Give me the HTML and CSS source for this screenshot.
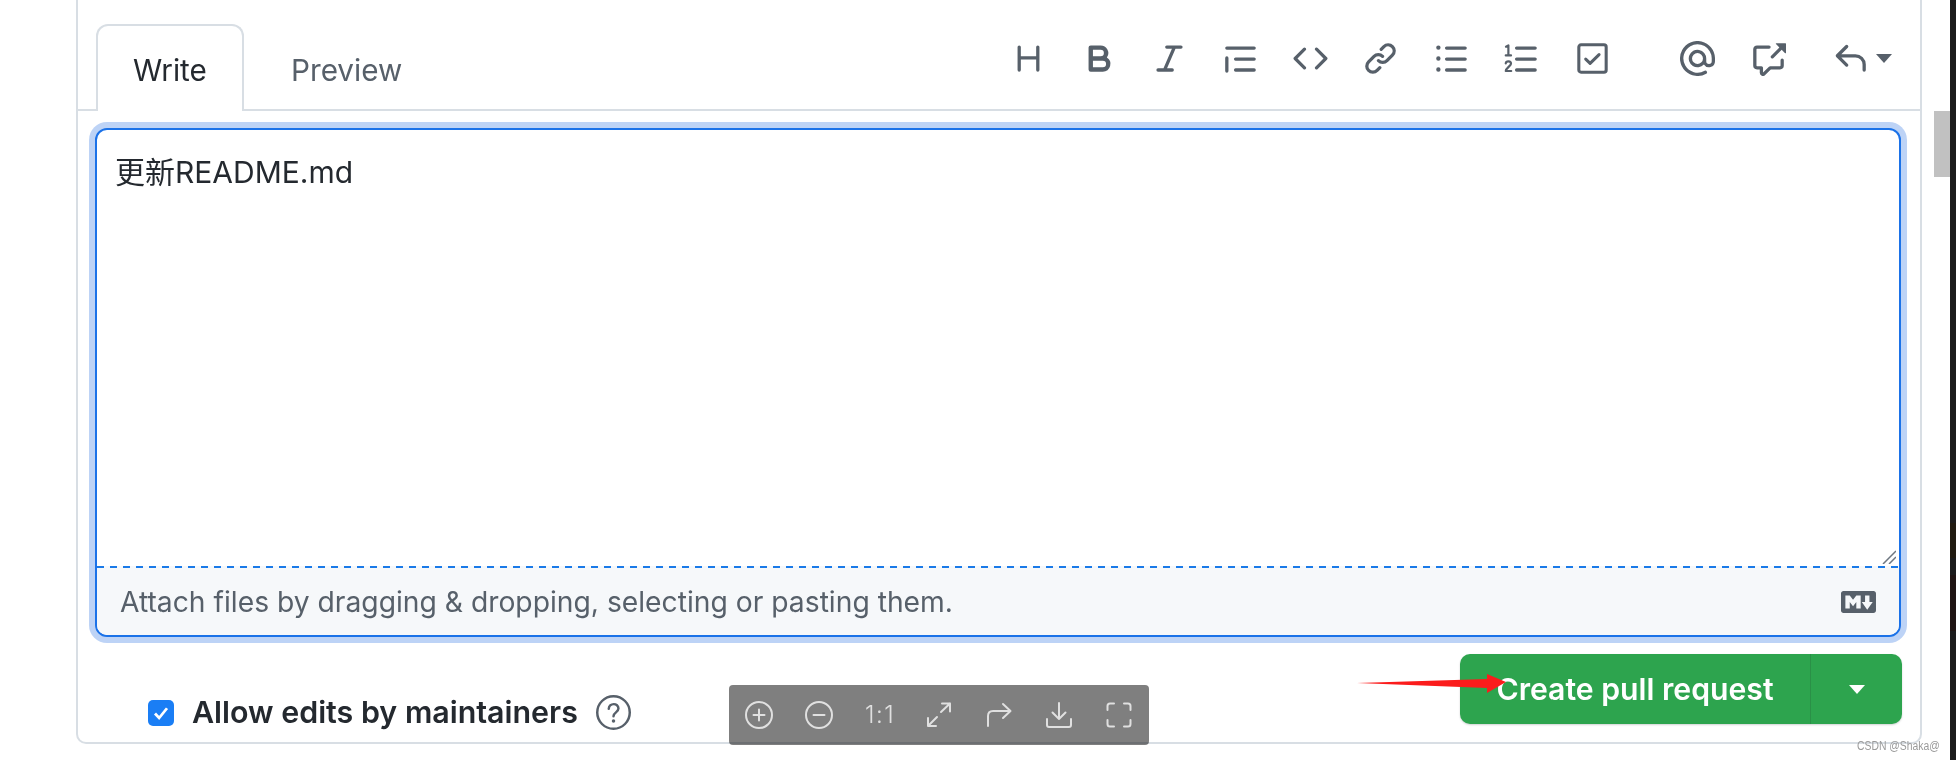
FILE: index.html
```html
<!DOCTYPE html>
<html lang="en">
<head>
<meta charset="utf-8">
<title>Create pull request</title>
<link rel="stylesheet" href="styles.css">
</head>
<body>
<div class="page">
  <main class="content">
    <section class="panel">
      <header class="head">
        <div class="tab tab-active">Write</div>
        <div class="tab tab-idle">Preview</div>
        <nav class="tools">
          <div class="tool-group">
            <svg class="ico" viewBox="0 0 16 16"><path d="M3.75 2a.75.75 0 0 1 .75.75V7h7V2.75a.75.75 0 0 1 1.5 0v10.5a.75.75 0 0 1-1.5 0V8.5h-7v4.75a.75.75 0 0 1-1.5 0V2.75A.75.75 0 0 1 3.75 2Z"/></svg>
            <svg class="ico" viewBox="0 0 16 16"><path d="M4 2h4.5a3.501 3.501 0 0 1 2.852 5.53A3.499 3.499 0 0 1 9.5 14H4a1 1 0 0 1-1-1V3a1 1 0 0 1 1-1Zm1 7v3h4.5a1.5 1.5 0 0 0 0-3Zm3.5-2a1.5 1.5 0 0 0 0-3H5v3Z"/></svg>
            <svg class="ico" viewBox="0 0 16 16"><path d="M6 2.75A.75.75 0 0 1 6.75 2h6.5a.75.75 0 0 1 0 1.5h-2.505l-3.858 9H9.25a.75.75 0 0 1 0 1.5h-6.5a.75.75 0 0 1 0-1.5h2.505l3.858-9H6.75A.75.75 0 0 1 6 2.75Z"/></svg>
            <svg class="ico" viewBox="0 0 16 16"><path d="M1.75 2.5h12.500a.75.75 0 0 1 0 1.500H1.75a.75.75 0 0 1 0-1.500Zm4 5h8.500a.75.75 0 0 1 0 1.500h-8.500a.75.75 0 0 1 0-1.500Zm0 5h8.500a.75.75 0 0 1 0 1.500h-8.500a.75.75 0 0 1 0-1.500ZM2.500 7.750v6a.75.75 0 0 1-1.500 0v-6a.75.75 0 0 1 1.500 0Z"/></svg>
            <svg class="ico" viewBox="0 0 16 16"><path d="m11.28 3.22 4.25 4.25a.75.75 0 0 1 0 1.06l-4.25 4.25a.749.749 0 0 1-1.275-.326.749.749 0 0 1 .215-.734L13.94 8l-3.72-3.72a.749.749 0 0 1 .326-1.275.749.749 0 0 1 .734.215Zm-6.56 0a.751.751 0 0 1 1.042.018.751.751 0 0 1 .018 1.042L2.06 8l3.72 3.72a.749.749 0 0 1-.326 1.275.749.749 0 0 1-.734-.215L.47 8.53a.75.75 0 0 1 0-1.06Z"/></svg>
            <svg class="ico" viewBox="0 0 16 16"><path d="m7.775 3.275 1.25-1.25a3.5 3.5 0 1 1 4.95 4.95l-2.5 2.5a3.5 3.5 0 0 1-4.95 0 .751.751 0 0 1 .018-1.042.751.751 0 0 1 1.042-.018 1.998 1.998 0 0 0 2.83 0l2.5-2.5a2.002 2.002 0 0 0-2.83-2.83l-1.25 1.25a.751.751 0 0 1-1.042-.018.751.751 0 0 1-.018-1.042Zm-4.69 9.64a1.998 1.998 0 0 0 2.83 0l1.25-1.25a.751.751 0 0 1 1.042.018.751.751 0 0 1 .018 1.042l-1.25 1.25a3.5 3.5 0 1 1-4.95-4.95l2.5-2.5a3.5 3.5 0 0 1 4.95 0 .751.751 0 0 1-.018 1.042.751.751 0 0 1-1.042.018 1.998 1.998 0 0 0-2.83 0l-2.5 2.5a1.998 1.998 0 0 0 0 2.83Z"/></svg>
            <svg class="ico" viewBox="0 0 16 16"><path d="M5.75 2.5h8.500a.75.75 0 0 1 0 1.500h-8.500a.75.75 0 0 1 0-1.500Zm0 5h8.500a.75.75 0 0 1 0 1.500h-8.500a.75.75 0 0 1 0-1.500Zm0 5h8.500a.75.75 0 0 1 0 1.500h-8.500a.75.75 0 0 1 0-1.500ZM2 14a1 1 0 1 1 0-2 1 1 0 0 1 0 2Zm1-6a1 1 0 1 1-2 0 1 1 0 0 1 2 0ZM2 4a1 1 0 1 1 0-2 1 1 0 0 1 0 2Z"/></svg>
            <svg class="ico" viewBox="0 0 16 16"><path d="M5 3.250a.75.75 0 0 1 .75-.75h8.500a.75.75 0 0 1 0 1.500h-8.500A.75.75 0 0 1 5 3.250Zm0 5a.75.75 0 0 1 .75-.75h8.500a.75.75 0 0 1 0 1.500h-8.500A.75.75 0 0 1 5 8.250Zm0 5a.75.75 0 0 1 .75-.75h8.500a.75.75 0 0 1 0 1.500h-8.500a.75.75 0 0 1-.75-.75Z"/><path class="ico-line" d="M.9 2.600 2 2v4.400M.8 6.600h2.400M.8 10.200c.2-1.200 2.400-1.200 2.400.2 0 1-2.400 2-2.400 3.300h2.500"/></svg>
            <svg class="ico" viewBox="0 0 16 16"><rect class="ico-line-heavy" x="1.75" y="1.75" width="12.5" height="12.5" rx="1"/><path class="ico-line-heavy" d="M4.900 8.300 6.900 10.200 11 6.200"/></svg>
          </div>
          <div class="tool-group tool-group-meta">
            <svg class="ico" viewBox="0 0 16 16"><path d="M4.75 2.37a6.501 6.501 0 0 0 6.5 11.26.75.75 0 0 1 .75 1.298A7.999 7.999 0 0 1 .989 4.148 8 8 0 0 1 16 7.75v1.5a2.75 2.75 0 0 1-5.072 1.475 3.999 3.999 0 0 1-6.65-4.19A4 4 0 0 1 12 8v1.25a1.25 1.25 0 0 0 2.5 0V7.867a6.5 6.5 0 0 0-9.75-5.496ZM10.5 8a2.5 2.5 0 1 0-5 0 2.5 2.5 0 0 0 5 0Z"/></svg>
            <svg class="ico" viewBox="0 0 16 16"><path d="M2.75 3.5a.25.25 0 0 0-.25.25v7.5c0 .138.112.25.25.25h2a.75.75 0 0 1 .75.75v2.19l2.72-2.72a.749.749 0 0 1 .53-.22h4.5a.25.25 0 0 0 .25-.25v-2.5a.75.75 0 0 1 1.5 0v2.5A1.75 1.75 0 0 1 13.25 13H9.06l-2.573 2.573A1.458 1.458 0 0 1 4 14.543V13H2.75A1.75 1.75 0 0 1 1 11.25v-7.5C1 2.784 1.784 2 2.75 2h5.5a.75.75 0 0 1 0 1.5ZM16 1.25v4.146a.25.25 0 0 1-.427.177L14.03 4.03l-3.75 3.75a.749.749 0 0 1-1.275-.326.749.749 0 0 1 .215-.734l3.75-3.75-1.543-1.543A.25.25 0 0 1 11.604 1h4.146a.25.25 0 0 1 .25.25Z"/></svg>
          </div>
          <div class="reply">
            <svg class="ico" viewBox="0 0 16 16"><path d="M6.78 1.97a.75.75 0 0 1 0 1.06L3.81 6h6.44A4.75 4.75 0 0 1 15 10.75v2.5a.75.75 0 0 1-1.5 0v-2.5a3.25 3.25 0 0 0-3.25-3.25H3.81l2.97 2.97a.749.749 0 0 1-.326 1.275.749.749 0 0 1-.734-.215L1.47 7.28a.75.75 0 0 1 0-1.06l4.25-4.25a.75.75 0 0 1 1.06 0Z"/></svg>
            <span class="caret caret-grey"></span>
          </div>
        </nav>
      </header>

      <div class="editor">
        <div class="write-area">
          <p class="message">更新README.md</p>
          <svg class="grip" viewBox="0 0 14 14"><path d="M1 14 14 1M7 14 14 7"/></svg>
        </div>
        <div class="dash"></div>
        <div class="attach">
          <span class="attach-text">Attach files by dragging &amp; dropping, selecting or pasting them.</span>
          <svg class="md" viewBox="0 3 16 10"><path d="M14.85 3c.63 0 1.15.52 1.14 1.15v7.7c0 .63-.51 1.15-1.15 1.15H1.15C.52 13 0 12.48 0 11.84V4.15C0 3.52.52 3 1.15 3ZM9 11V5H7L5.5 7 4 5H2v6h2V8l1.5 1.92L7 8v3Zm2.99.5L14.5 8H13V5h-2v3H9.5Z"/></svg>
        </div>
      </div>

      <div class="actions">
        <label class="allow">
          <span class="check"><svg viewBox="0 0 16 16"><path d="M3.2 8.4 6.5 12 12.8 4.2"/></svg></span>
          <span class="allow-text">Allow edits by maintainers</span>
          <svg class="help" viewBox="0 0 34 34"><circle cx="17" cy="17" r="15.8"/><path d="M12.4 13.4c.3-6 9.4-6 9.4-.2 0 3.6-4.8 3.8-4.8 7.4"/><circle class="help-dot" cx="17" cy="25.2" r="1.7"/></svg>
        </label>
        <div class="submit">
          <span class="submit-main">Create pull request</span>
          <span class="submit-more"><span class="caret caret-white"></span></span>
        </div>
      </div>
    </section>
  </main>

  <aside class="scroller"><div class="thumb"></div></aside>
  <div class="edge">
    <div class="edge-tint edge-amber"></div>
    <div class="edge-tint edge-red"></div>
  </div>

  <svg class="arrow" viewBox="0 0 149 19"><path d="M0 9 130 5V0L149 8 130 19V14Z"/></svg>

  <div class="viewer">
    <svg class="v-ico" viewBox="0 0 28 28"><circle cx="14" cy="14" r="13"/><path d="M14 8.5v11M8.5 14h11"/></svg>
    <svg class="v-ico" viewBox="0 0 28 28"><circle cx="14" cy="14" r="13"/><path d="M8.5 14h11"/></svg>
    <span class="v-text">1:1</span>
    <svg class="v-ico" viewBox="0 0 28 28"><path d="M16 11 25 2.500M17 2.500h8v8M12 16 3 25M3 17v8h8"/></svg>
    <svg class="v-ico" viewBox="0 0 28 28"><path d="M3 25V15c0-3 2-5 5-5h17M18 3l7.500 7L18 17"/></svg>
    <svg class="v-ico" viewBox="0 0 28 28"><path d="M14 2v16M7.500 11.500 14 18l6.500-6.500M2 18v6c0 1.300.7 2 2 2h20c1.300 0 2-.7 2-2v-6"/></svg>
    <svg class="v-ico" viewBox="0 0 28 28"><path d="M2.500 9V5c0-1.500 1-2.500 2.500-2.500h4M19 2.500h4c1.500 0 2.500 1 2.500 2.500v4M25.500 19v4c0 1.500-1 2.500-2.500 2.500h-4M9 25.500H5c-1.500 0-2.500-1-2.500-2.500v-4"/></svg>
  </div>

  <div class="watermark">CSDN @Shaka@</div>
</div>
</body>
</html>
```

FILE: styles.css
```css
* { box-sizing: border-box; }

html, body {
  margin: 0;
  height: 760px;
  overflow: hidden;
  background: #fff;
}

.page {
  position: relative;
  display: flex;
  width: 1956px;
  height: 760px;
  overflow: hidden;
  background: #fff;
  color: #24292f;
  font-family: Inter, "Noto Sans CJK SC", sans-serif;
  filter: blur(.4px);
}

.content {
  width: 1934px;
  padding-left: 76px;
}

.panel {
  width: 1846px;
  height: 744px;
  border: 2px solid #d8dee4;
  border-top: 0;
  border-radius: 0 0 10px 10px;
}

.head {
  display: flex;
  align-items: flex-end;
  height: 111px;
  padding: 0 28.500px 0 18px;
  border-bottom: 2px solid #d8dee4;
}

.tab {
  height: 87px;
  margin-bottom: -2px;
  font-size: 29.700px;
  line-height: 40px;
}

.tab-active {
  width: 148px;
  padding: 24px 0 0 35px;
  border: 2px solid #d8dee4;
  border-bottom: 0;
  border-radius: 12px 12px 0 0;
  background: #fff;
  color: #24292f;
}

.tab-idle {
  padding: 26px 0 0 47px;
  color: #57606a;
}

.tools {
  display: flex;
  align-items: center;
  align-self: stretch;
  margin-left: auto;
  padding-top: 7px;
}

.tool-group {
  display: flex;
  gap: 35.400px;
}

.tool-group-meta {
  margin-left: 70px;
  gap: 36px;
}

.reply {
  display: flex;
  align-items: center;
  gap: 8px;
  margin-left: 47px;
}

.ico {
  display: block;
  width: 35px;
  height: 35px;
  fill: #57606a;
}

.ico-line {
  fill: none;
  stroke: #57606a;
  stroke-width: 1;
  stroke-linecap: round;
  stroke-linejoin: round;
}

.ico-line-heavy {
  fill: none;
  stroke: #57606a;
  stroke-width: 1.400;
  stroke-linecap: round;
  stroke-linejoin: round;
}

.caret {
  display: block;
  width: 0;
  height: 0;
  border-style: solid;
  border-width: 9px 8.500px 0;
  border-color: transparent;
}

.caret-grey { border-top-color: #57606a; }
.caret-white { border-top-color: #fff; }

.editor {
  width: 1806px;
  height: 509px;
  margin: 17px 0 0 17px;
  border: 2px solid #1b72e8;
  border-radius: 12px;
  box-shadow: 0 0 0 6px #bdd3f6;
  background: #fff;
}

.write-area {
  position: relative;
  height: 436px;
}

.message {
  margin: 0;
  padding: 22px 0 0 18px;
  font-size: 30px;
  line-height: 40px;
  color: #24292f;
}

.grip {
  position: absolute;
  right: 3px;
  bottom: 2px;
  width: 14px;
  height: 14px;
  fill: none;
  stroke: #6e7781;
  stroke-width: 1.500;
}

.dash {
  height: 2px;
  background: repeating-linear-gradient(90deg, #1a7ae8 0 7px, transparent 7px 13px) #f6f8fa;
}

.attach {
  display: flex;
  align-items: center;
  justify-content: space-between;
  height: 67px;
  padding: 0 23px 0 23px;
  background: #f6f8fa;
  border-radius: 0 0 10px 10px;
}

.attach-text {
  font-size: 28.250px;
  line-height: 40px;
  color: #57606a;
}

.md {
  display: block;
  width: 35px;
  height: 22px;
  fill: #57606a;
}

.actions {
  display: flex;
  justify-content: space-between;
  align-items: flex-start;
  padding: 17px 18px 0 70px;
}

.allow {
  display: flex;
  align-items: center;
  margin-top: 41px;
  height: 35px;
}

.check {
  display: flex;
  align-items: center;
  justify-content: center;
  width: 26px;
  height: 26px;
  border-radius: 5px;
  background: #1a7ef5;
}

.check svg {
  display: block;
  width: 20px;
  height: 20px;
  fill: none;
  stroke: #fff;
  stroke-width: 2.200;
}

.allow-text {
  margin-left: 18px;
  font-size: 30.400px;
  font-weight: 600;
  line-height: 35px;
  color: #24292f;
}

.help {
  display: block;
  width: 35px;
  height: 35px;
  margin-left: 18px;
  fill: none;
  stroke: #57606a;
  stroke-width: 2.400;
  stroke-linecap: round;
}

.help-dot {
  fill: #57606a;
  stroke: none;
}

.submit {
  display: flex;
  width: 442px;
  height: 70px;
  border-radius: 10px;
  background: #2da44e;
  box-shadow: 0 1px 2px rgba(27, 31, 36, .2);
  color: #fff;
}

.submit-main {
  display: flex;
  align-items: center;
  justify-content: center;
  width: 350px;
  font-size: 30.200px;
  font-weight: 600;
}

.submit-more {
  display: flex;
  align-items: center;
  justify-content: center;
  flex: 1;
  border-left: 1px solid rgba(27, 31, 36, .15);
}

.scroller {
  width: 16px;
  background: #fff;
}

.thumb {
  height: 66px;
  margin-top: 111px;
  background: #c1c1c1;
}

.edge {
  width: 6px;
  height: 760px;
  background: #1b1b1b;
}

.edge-tint { width: 100%; }

.edge-amber {
  height: 35px;
  margin-top: 523px;
  background: #201a10;
}

.edge-red {
  height: 56px;
  margin-top: 17px;
  background: #1f1412;
}

.arrow {
  position: absolute;
  left: 1357px;
  top: 674px;
  width: 149px;
  height: 19px;
  fill: #fb1c1c;
}

.viewer {
  position: absolute;
  left: 729px;
  top: 685px;
  display: flex;
  align-items: center;
  justify-content: space-between;
  width: 420px;
  height: 60px;
  padding: 0 16px;
  border-radius: 4px;
  background: rgba(0, 0, 0, .5);
  color: #e0e0e0;
}

.v-ico {
  display: block;
  width: 28px;
  height: 28px;
  fill: none;
  stroke: #e0e0e0;
  stroke-width: 2;
  stroke-linecap: round;
  stroke-linejoin: round;
}

.v-text {
  width: 28px;
  font-size: 24px;
  font-weight: 300;
  line-height: 28px;
  letter-spacing: 1.500px;
  text-align: center;
  white-space: nowrap;
}

.watermark {
  position: absolute;
  left: 1857px;
  top: 738px;
  font-family: "Liberation Sans", sans-serif;
  font-size: 12.500px;
  line-height: 16px;
  white-space: nowrap;
  color: #9a9a9a;
  transform: scaleX(.83);
  transform-origin: left center;
}
```
